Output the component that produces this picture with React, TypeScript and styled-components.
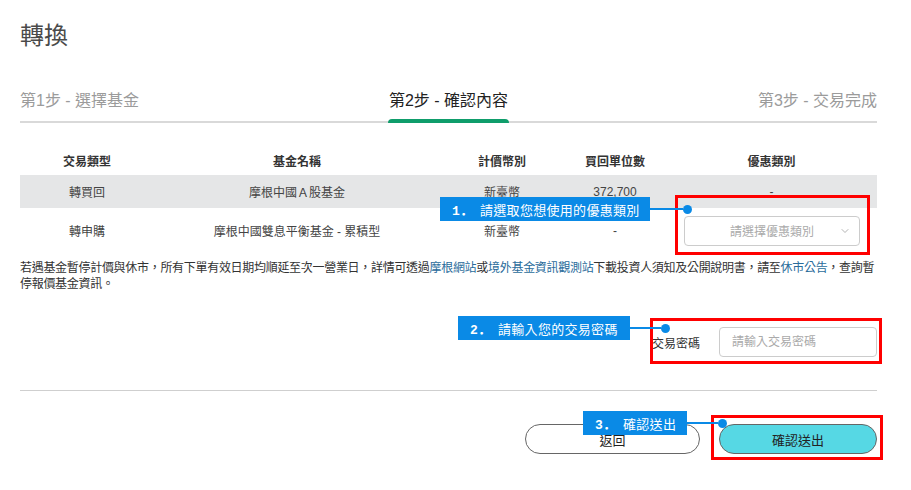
import React from 'react';
import styled, { createGlobalStyle } from 'styled-components';
import { ChevronDown } from 'lucide-react';

const GlobalStyle = createGlobalStyle`
  body {
    margin: 0;
    background: #fff;
    font-family: "Liberation Sans", "Noto Sans CJK TC", sans-serif;
    color: #333;
  }
`;

const columns = '134px 286px 124px 102px 1fr';

const rows = [
  { type: '轉買回', fund: '摩根中國Ａ股基金', currency: '新臺幣', units: '372,700', discount: '-' },
  { type: '轉申購', fund: '摩根中國雙息平衡基金 - 累積型', currency: '新臺幣', units: '-', discount: null },
];

const callouts = [
  { left: 440, top: 197, width: 210, line: 33, num: '1．', text: '請選取您想使用的優惠類別' },
  { left: 458, top: 316, width: 172, line: 31, num: '2．', text: '請輸入您的交易密碼' },
  { left: 583, top: 411, width: 104, line: 31, num: '3．', text: '確認送出' },
];

const highlights = [
  { left: 675, top: 195, width: 195, height: 60 },
  { left: 650, top: 318, width: 232, height: 46 },
  { left: 711, top: 415, width: 172, height: 45 },
];

const App: React.FC = () => {
  return (
    <>
      <GlobalStyle />
      <StyledPage>
        <StyledContent>
          <StyledTitle>轉換</StyledTitle>
          <StyledStepBar>
            <StyledStep>第1步 - 選擇基金</StyledStep>
            <StyledStep $active>第2步 - 確認內容</StyledStep>
            <StyledStep>第3步 - 交易完成</StyledStep>
          </StyledStepBar>

          <StyledTable>
            <StyledRow $height={30}>
              <StyledHeadCell>交易類型</StyledHeadCell>
              <StyledHeadCell>基金名稱</StyledHeadCell>
              <StyledHeadCell>計價幣別</StyledHeadCell>
              <StyledHeadCell>買回單位數</StyledHeadCell>
              <StyledHeadCell>優惠類別</StyledHeadCell>
            </StyledRow>
            {rows.map((row, i) => (
              <StyledRow key={row.type} $height={i === 0 ? 33 : 45} $shaded={i === 0}>
                <StyledCell>{row.type}</StyledCell>
                <StyledCell>{row.fund}</StyledCell>
                <StyledCell>{row.currency}</StyledCell>
                <StyledCell>{row.units}</StyledCell>
                <StyledCell>
                  {row.discount ?? (
                    <StyledSelect>
                      <span>請選擇優惠類別</span>
                      <StyledChevron>
                        <ChevronDown size={12} strokeWidth={1.5} />
                      </StyledChevron>
                    </StyledSelect>
                  )}
                </StyledCell>
              </StyledRow>
            ))}
          </StyledTable>

          <StyledNotice>
            若遇基金暫停計價與休市，所有下單有效日期均順延至次一營業日，詳情可透過
            <StyledLink>摩根網站</StyledLink>或<StyledLink>境外基金資訊觀測站</StyledLink>
            下載投資人須知及公開說明書，請至<StyledLink>休市公告</StyledLink>，查詢暫停報價基金資訊。
          </StyledNotice>

          <StyledPasswordRow>
            <StyledLabel>交易密碼</StyledLabel>
            <StyledInput type="password" placeholder="請輸入交易密碼" />
          </StyledPasswordRow>

          <StyledDivider />

          <StyledButtonRow>
            <StyledButton $width={175}>返回</StyledButton>
            <StyledButton $width={158} $primary>
              確認送出
            </StyledButton>
          </StyledButtonRow>
        </StyledContent>

        {highlights.map((h) => (
          <StyledHighlight key={h.top} $left={h.left} $top={h.top} $width={h.width} $height={h.height} />
        ))}
        {callouts.map((c) => (
          <StyledCallout key={c.text} $left={c.left} $top={c.top}>
            <StyledTag $width={c.width}>
              <StyledTagNum>{c.num}</StyledTagNum>
              {c.text}
            </StyledTag>
            <StyledConnector $length={c.line} />
            <StyledDot />
          </StyledCallout>
        ))}
      </StyledPage>
    </>
  );
};

const StyledPage = styled.div`
  position: relative;
  width: 911px;
  height: 490px;
  overflow: hidden;
`;

const StyledContent = styled.div`
  margin: 0 34px 0 20px;
`;

const StyledTitle = styled.h1`
  margin: 0;
  padding-top: 20px;
  font-size: 24px;
  line-height: 32px;
  font-weight: 400;
  color: #4a4a4a;
`;

const StyledStepBar = styled.div`
  display: flex;
  justify-content: space-between;
  margin-top: 39px;
  border-bottom: 2px solid #d9d9d9;
`;

const StyledStep = styled.div<{ $active?: boolean }>`
  position: relative;
  font-size: 16px;
  line-height: 20px;
  padding-bottom: 10px;
  color: ${(p) => (p.$active ? '#222' : '#9b9b9b')};
  &::after {
    content: '';
    display: ${(p) => (p.$active ? 'block' : 'none')};
    position: absolute;
    left: -1px;
    right: -1px;
    bottom: -2px;
    height: 4px;
    border-radius: 4px 4px 0 0;
    background: #0f9d6b;
  }
`;

const StyledTable = styled.div`
  margin-top: 22px;
`;

const StyledRow = styled.div<{ $height: number; $shaded?: boolean }>`
  display: grid;
  grid-template-columns: ${columns};
  height: ${(p) => p.$height}px;
  background: ${(p) => (p.$shaded ? '#e5e6e7' : 'transparent')};
`;

const StyledHeadCell = styled.div`
  display: flex;
  align-items: center;
  justify-content: center;
  font-size: 12px;
  font-weight: 700;
  color: #333;
`;

const StyledCell = styled.div`
  display: flex;
  align-items: center;
  justify-content: center;
  font-size: 12px;
  color: #444;
`;

const StyledSelect = styled.div`
  box-sizing: border-box;
  width: 176px;
  height: 30px;
  margin-left: 1px;
  border: 1px solid #ccc;
  border-radius: 4px;
  display: flex;
  align-items: center;
  justify-content: center;
  position: relative;
  color: #aaa;
  font-size: 12px;
`;

const StyledChevron = styled.span`
  position: absolute;
  right: 8px;
  top: 8px;
  color: #999;
  display: flex;
`;

const StyledNotice = styled.p`
  margin: 7px 0 0;
  font-size: 12px;
  letter-spacing: -0.3px;
  line-height: 16px;
  color: #333;
`;

const StyledLink = styled.span`
  color: #2a6c9b;
`;

const StyledPasswordRow = styled.div`
  display: flex;
  justify-content: flex-end;
  align-items: center;
  gap: 19px;
  margin-top: 35px;
`;

const StyledLabel = styled.span`
  font-size: 12px;
  color: #333;
`;

const StyledInput = styled.input`
  box-sizing: border-box;
  width: 158px;
  height: 30px;
  padding: 0 12px;
  border: 1px solid #ccc;
  border-radius: 4px;
  font-family: inherit;
  font-size: 12px;
  outline: none;
  &::placeholder {
    color: #aaa;
  }
`;

const StyledDivider = styled.div`
  margin-top: 33px;
  height: 1px;
  background: #cfcfcf;
`;

const StyledButtonRow = styled.div`
  display: flex;
  justify-content: flex-end;
  gap: 19px;
  margin-top: 33px;
`;

const StyledButton = styled.button<{ $width: number; $primary?: boolean }>`
  box-sizing: border-box;
  width: ${(p) => p.$width}px;
  height: 30px;
  border-radius: 15px;
  border: 1.5px solid #666;
  background: ${(p) => (p.$primary ? '#56d8e4' : '#fff')};
  color: #222;
  font-family: inherit;
  font-size: 13px;
`;

const StyledHighlight = styled.div<{ $left: number; $top: number; $width: number; $height: number }>`
  position: absolute;
  left: ${(p) => p.$left}px;
  top: ${(p) => p.$top}px;
  width: ${(p) => p.$width}px;
  height: ${(p) => p.$height}px;
  box-sizing: border-box;
  border: 3px solid #ff0000;
`;

const StyledCallout = styled.div<{ $left: number; $top: number }>`
  position: absolute;
  left: ${(p) => p.$left}px;
  top: ${(p) => p.$top}px;
  display: flex;
  align-items: center;
`;

const StyledTag = styled.div<{ $width: number }>`
  box-sizing: border-box;
  width: ${(p) => p.$width}px;
  height: 24px;
  padding-left: 12px;
  display: flex;
  align-items: center;
  background: #0a8ae6;
  color: #fff;
  font-size: 13px;
  letter-spacing: 0.3px;
  white-space: pre;
`;

const StyledTagNum = styled.span`
  font-family: "Liberation Mono", "Noto Sans CJK SC", monospace;
  font-weight: 700;
  width: 28px;
  flex-shrink: 0;
`;

const StyledConnector = styled.div<{ $length: number }>`
  width: ${(p) => p.$length}px;
  height: 2px;
  background: #0a8ae6;
`;

const StyledDot = styled.div`
  width: 9px;
  height: 9px;
  border-radius: 50%;
  background: #0a8ae6;
`;

export default App;
